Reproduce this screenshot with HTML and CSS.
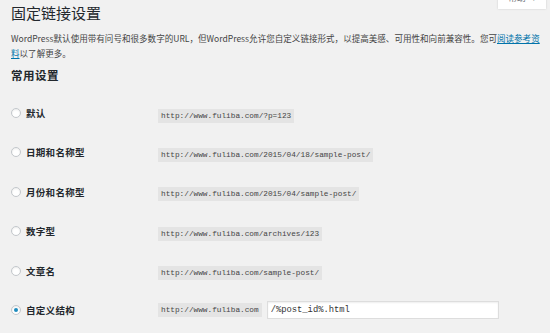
FILE: index.html
```html
<!DOCTYPE html>
<html lang="zh-CN">
<head>
    <meta charset="UTF-8">
    <meta name="viewport" content="width=device-width, initial-scale=1.0">
    <title>固定链接设置</title>
    <link rel="stylesheet" href="styles.css">
</head>
<body>
    <div class="help-tab">帮助 <span class="caret">▾</span></div>
    <div id="wrap">
        <h1>固定链接设置</h1>
        <p class="intro">WordPress默认使用带有问号和很多数字的URL，但WordPress允许您自定义链接形式，以提高美感、可用性和向前兼容性。您可<a href="#">阅读参考资料</a>以了解更多。</p>
        <h2>常用设置</h2>

        <div class="form-table">
            <div class="row">
                <label><input type="radio" name="selection"> 默认</label>
                <div><code>http://www.fuliba.com/?p=123</code></div>
            </div>
            <div class="row">
                <label><input type="radio" name="selection"> 日期和名称型</label>
                <div><code>http://www.fuliba.com/2015/04/18/sample-post/</code></div>
            </div>
            <div class="row">
                <label><input type="radio" name="selection"> 月份和名称型</label>
                <div><code>http://www.fuliba.com/2015/04/sample-post/</code></div>
            </div>
            <div class="row">
                <label><input type="radio" name="selection"> 数字型</label>
                <div><code>http://www.fuliba.com/archives/123</code></div>
            </div>
            <div class="row">
                <label><input type="radio" name="selection"> 文章名</label>
                <div><code>http://www.fuliba.com/sample-post/</code></div>
            </div>
            <div class="row">
                <label><input type="radio" name="selection" checked> 自定义结构</label>
                <div class="custom">
                    <code>http://www.fuliba.com</code>
                    <input type="text" class="structure" value="/%post_id%.html">
                </div>
            </div>
        </div>
    </div>
</body>
</html>
```

FILE: styles.css
```css
body {
    margin: 0;
    background-color: #f1f1f1;
    color: #444;
    font-family: "Noto Sans CJK SC", "Noto Sans", sans-serif;
    overflow: hidden;
}

#wrap {
    padding: 0 3px 0 11px;
}

h1 {
    margin: 0;
    padding-top: 3px;
    font-size: 15px;
    line-height: 20px;
    font-weight: 400;
    color: #23282d;
}

.intro {
    margin: 8px 0 0;
    font-size: 8.55px;
    line-height: 14.5px;
}

.intro a {
    color: #0073aa;
}

h2 {
    margin: 7px 0 0;
    font-size: 11.5px;
    line-height: 16px;
    letter-spacing: 0.5px;
    color: #23282d;
}

.form-table {
    margin-top: 10.3px;
}

.row {
    display: grid;
    grid-template-columns: 147px auto;
    align-items: center;
    height: 39.4px;
}

.row label {
    display: flex;
    align-items: center;
    font-size: 9.5px;
    font-weight: bold;
    letter-spacing: 0.3px;
    color: #23282d;
}

.row input[type="radio"] {
    appearance: none;
    display: inline-flex;
    align-items: center;
    justify-content: center;
    width: 10px;
    height: 10px;
    margin: 0 5px 0 0;
    border: 1px solid #c3c7cb;
    border-radius: 50%;
    background-color: #fff;
    box-shadow: inset 0 1px 2px rgba(0, 0, 0, 0.08);
}

.row input[type="radio"]:checked::before {
    content: "";
    width: 4px;
    height: 4px;
    border-radius: 50%;
    background-color: #1e8cbe;
}

code {
    display: inline-block;
    padding: 0 3px;
    line-height: 14px;
    background-color: #e4e4e4;
    font-family: "Liberation Mono", monospace;
    font-size: 7.75px;
    color: #444;
    vertical-align: middle;
}

.custom {
    display: flex;
    align-items: center;
    gap: 5px;
}

.structure {
    box-sizing: border-box;
    width: 232px;
    height: 18px;
    margin: 0;
    padding: 0 3px;
    border: 1px solid #ddd;
    background-color: #fff;
    box-shadow: inset 0 1px 2px rgba(0, 0, 0, 0.07);
    font-family: "Liberation Mono", monospace;
    font-size: 8.8px;
    color: #333;
    outline: none;
}

.help-tab {
    position: absolute;
    top: -10px;
    right: 4px;
    box-sizing: border-box;
    width: 48px;
    height: 19px;
    padding-top: 2px;
    background-color: #fff;
    box-shadow: 0 0 2px rgba(0, 0, 0, 0.15);
    font-size: 8.8px;
    line-height: 12px;
    text-align: center;
    color: #72777c;
}

.caret {
    margin-left: 4px;
    font-size: 7px;
}
```
